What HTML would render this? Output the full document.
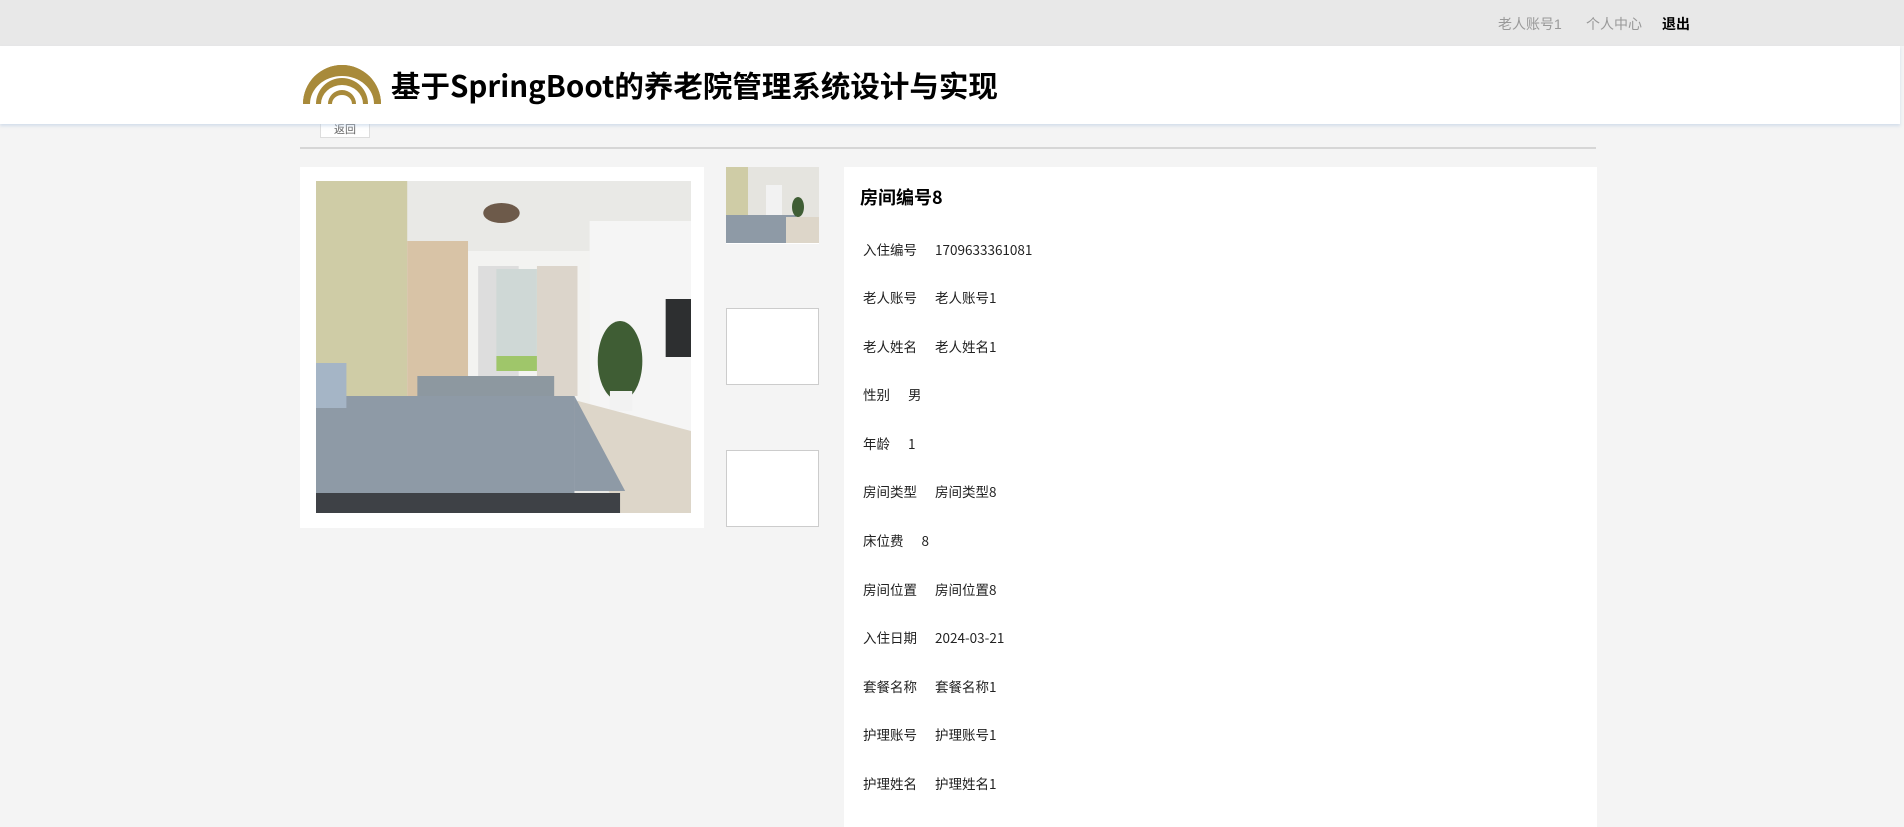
<!DOCTYPE html>
<html><head><meta charset="utf-8"><style>
*{margin:0;padding:0;box-sizing:border-box}
body{width:1904px;height:810px;overflow:hidden;background:#f4f4f4;font-family:"Liberation Sans","Noto Sans CJK SC",sans-serif;position:relative}
.top{position:absolute;left:0;top:0;width:1904px;height:46px;background:#e8e8e8}
.top span{position:absolute;top:14px;font-size:14px;color:#999}
.hdr{position:absolute;left:0;top:46px;width:1900px;height:78px;background:#fff;box-shadow:0 2px 3px rgba(180,200,225,.5);z-index:2}
.title{position:absolute;left:391px;top:19px;font-size:29.5px;font-weight:bold;color:#000;letter-spacing:0;font-family:"Noto Sans CJK SC",sans-serif;line-height:40px}
.back{position:absolute;left:320px;top:112px;width:50px;height:26px;background:#fff;border:1px solid #ddd;font-size:11px;color:#666;text-align:center;line-height:34px}
.hr{position:absolute;left:300px;top:147px;width:1296px;height:2px;background:#d6d6d6}
.lc{position:absolute;left:300px;top:167px;width:404px;height:361px;background:#fff}
.th{position:absolute;left:726px;width:93px;height:77px;background:#fff;border:1px solid #ccc}
.rc{position:absolute;left:844px;top:167px;width:753px;height:660px;background:#fff}
.rc h2{position:absolute;left:16px;top:17px;font-size:18px;font-weight:bold;font-family:"Noto Sans CJK SC",sans-serif}
.row{position:absolute;left:19px;font-size:13.5px;color:#222;font-family:"Noto Sans CJK SC",sans-serif;line-height:18px}
.row b{font-weight:normal;margin-right:18px}
</style></head><body>
<div class="top">
<span style="left:1498px">老人账号1</span>
<span style="left:1586px">个人中心</span>
<span style="left:1662px;color:#000;font-weight:bold">退出</span>
</div>
<div class="back">返回</div>
<div class="hdr">
<svg style="position:absolute;left:300px;top:14px" width="84" height="46" viewBox="0 0 84 46">
<path d="M3 44 A39 39 0 0 1 81 44 L77 44 A35 30 0 0 0 7 44 Z" fill="#a88a3a"/>
<path d="M3 44 A39 39 0 0 1 81 44 L74 44 A32 28 0 0 0 10 44 Z" fill="#a88a3a"/>
<path d="M16 44 A26 26 0 0 1 68 44 L63 44 A21 19 0 0 0 21 44 Z" fill="#a88a3a"/>
<path d="M28 44 A14 14 0 0 1 56 44 L52 44 A10 9 0 0 0 32 44 Z" fill="#a88a3a"/>
</svg>
<div class="title">基于SpringBoot的养老院管理系统设计与实现</div>
</div>
<div class="hr"></div>
<div class="lc">
<svg style="position:absolute;left:16px;top:14px" width="375" height="332" viewBox="0 0 370 332" preserveAspectRatio="none">
<rect width="370" height="332" fill="#e9e9e6"/>
<rect x="0" y="0" width="90" height="230" fill="#cfcca6"/>
<rect x="90" y="60" width="60" height="170" fill="#d8c3a6"/>
<rect x="150" y="70" width="120" height="170" fill="#f3f3f1"/>
<rect x="160" y="85" width="40" height="125" fill="#ddd"/>
<rect x="178" y="88" width="40" height="100" fill="#cfd8d6"/>
<rect x="178" y="175" width="40" height="15" fill="#9fc66a"/>
<rect x="218" y="85" width="40" height="130" fill="#dcd5cb"/>
<rect x="270" y="40" width="100" height="210" fill="#f5f5f5"/>
<rect x="345" y="118" width="25" height="58" fill="#2d2f30"/>
<ellipse cx="300" cy="180" rx="22" ry="40" fill="#3f5d34"/>
<rect x="290" y="210" width="22" height="20" fill="#f2f2f2"/>
<ellipse cx="183" cy="32" rx="18" ry="10" fill="#6d5a4a"/>
<polygon points="240,215 370,250 370,332 300,332" fill="#ddd6c9"/>
<rect x="100" y="195" width="135" height="35" fill="#8d98a0"/>
<rect x="0" y="215" width="255" height="100" fill="#8e9aa6"/>
<polygon points="255,215 305,310 255,310" fill="#8e9aa6"/>
<rect x="0" y="182" width="30" height="45" fill="#a5b5c6"/>
<rect x="0" y="312" width="300" height="20" fill="#3e4146"/>
</svg>
</div>
<div class="th" style="top:167px;border:none;overflow:hidden">
<svg width="93" height="76" viewBox="0 0 93 76"><rect width="93" height="76" fill="#e5e4df"/><rect width="22" height="50" fill="#cfcca6"/><rect x="40" y="18" width="16" height="32" fill="#f2f2f2"/><rect x="0" y="48" width="70" height="28" fill="#8e9aa6"/><rect x="60" y="50" width="33" height="26" fill="#ddd6c9"/><ellipse cx="72" cy="40" rx="6" ry="10" fill="#3f5d34"/></svg>
</div>
<div class="th" style="top:308px"></div>
<div class="th" style="top:450px"></div>
<div class="rc">
<h2>房间编号8</h2>
<div class="row" style="top:73px"><b>入住编号</b>1709633361081</div>
<div class="row" style="top:121px"><b>老人账号</b>老人账号1</div>
<div class="row" style="top:170px"><b>老人姓名</b>老人姓名1</div>
<div class="row" style="top:218px"><b>性别</b>男</div>
<div class="row" style="top:267px"><b>年龄</b>1</div>
<div class="row" style="top:315px"><b>房间类型</b>房间类型8</div>
<div class="row" style="top:364px"><b>床位费</b>8</div>
<div class="row" style="top:413px"><b>房间位置</b>房间位置8</div>
<div class="row" style="top:461px"><b>入住日期</b>2024-03-21</div>
<div class="row" style="top:510px"><b>套餐名称</b>套餐名称1</div>
<div class="row" style="top:558px"><b>护理账号</b>护理账号1</div>
<div class="row" style="top:607px"><b>护理姓名</b>护理姓名1</div>
</div>
</body></html>
